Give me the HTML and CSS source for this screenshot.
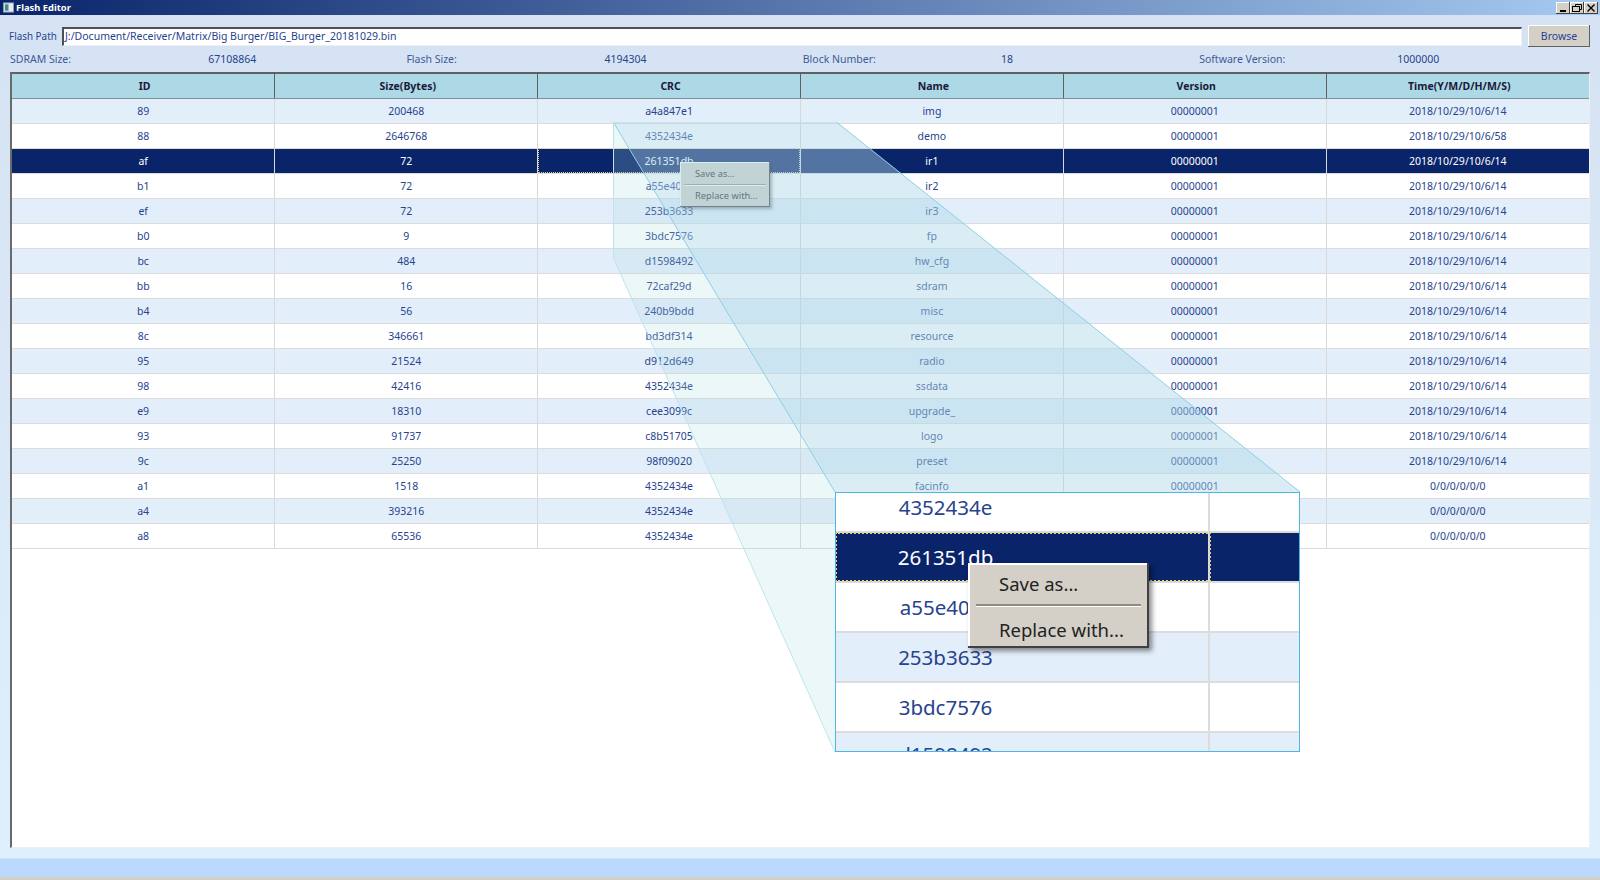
FILE: index.html
```html
<!DOCTYPE html>
<html lang="en">
  <head>
    <meta charset="UTF-8" />
    <meta name="viewport" content="width=device-width, initial-scale=1.0" />
    <title>Flash Editor</title>
    <link rel="stylesheet" href="styles.css">
  </head>

  <body>
    <div class="window">
      <div class="title-bar">
        <svg class="app-icon" width="11" height="11" viewBox="0 0 12 11">
          <rect x="0.5" y="0.5" width="11" height="10" fill="#e8ecef" stroke="#8fa0b0" />
          <rect x="2" y="2" width="4" height="7" fill="#3f8f86" />
        </svg>
        <span class="title-text">Flash Editor</span>
        <div class="window-buttons">
          <button class="window-button">
            <svg width="14" height="12" viewBox="0 0 14 12"><rect x="4" y="8" width="6" height="2" fill="#000" /></svg>
          </button>
          <button class="window-button">
            <svg width="14" height="12" viewBox="0 0 14 12" fill="none" stroke="#000"><path d="M5.5 4.5V2.5H11.5V7.5H9.5" /><rect x="2.5" y="4.5" width="7" height="5" /></svg>
          </button>
          <button class="window-button">
            <svg width="14" height="12" viewBox="0 0 14 12" fill="none" stroke="#000" stroke-width="1.4"><path d="M3.5 2.5L10.5 9.5M10.5 2.5L3.5 9.5" /></svg>
          </button>
        </div>
      </div>

      <div class="content">
        <div class="path-row">
          <span class="path-label">Flash Path</span>
          <div class="path-input">J:/Document/Receiver/Matrix/Big Burger/BIG_Burger_20181029.bin</div>
          <button class="browse-button">Browse</button>
        </div>

        <div class="info-row">
          <span class="info-label">SDRAM Size:</span><span>67108864</span>
          <span class="info-label">Flash Size:</span><span>4194304</span>
          <span class="info-label">Block Number:</span><span>18</span>
          <span class="info-label">Software Version:</span><span>1000000</span>
        </div>

        <div class="table-frame">
          <table class="flash-table">
            <thead>
              <tr><th>ID</th><th>Size(Bytes)</th><th>CRC</th><th>Name</th><th>Version</th><th>Time(Y/M/D/H/M/S)</th></tr>
            </thead>
            <tbody>
              <tr><td>89</td><td>200468</td><td>a4a847e1</td><td>img</td><td>00000001</td><td>2018/10/29/10/6/14</td></tr>
              <tr><td>88</td><td>2646768</td><td>4352434e</td><td>demo</td><td>00000001</td><td>2018/10/29/10/6/58</td></tr>
              <tr class="selected"><td>af</td><td>72</td><td class="focused">261351db</td><td>ir1</td><td>00000001</td><td>2018/10/29/10/6/14</td></tr>
              <tr><td>b1</td><td>72</td><td>a55e40c7</td><td>ir2</td><td>00000001</td><td>2018/10/29/10/6/14</td></tr>
              <tr><td>ef</td><td>72</td><td>253b3633</td><td>ir3</td><td>00000001</td><td>2018/10/29/10/6/14</td></tr>
              <tr><td>b0</td><td>9</td><td>3bdc7576</td><td>fp</td><td>00000001</td><td>2018/10/29/10/6/14</td></tr>
              <tr><td>bc</td><td>484</td><td>d1598492</td><td>hw_cfg</td><td>00000001</td><td>2018/10/29/10/6/14</td></tr>
              <tr><td>bb</td><td>16</td><td>72caf29d</td><td>sdram</td><td>00000001</td><td>2018/10/29/10/6/14</td></tr>
              <tr><td>b4</td><td>56</td><td>240b9bdd</td><td>misc</td><td>00000001</td><td>2018/10/29/10/6/14</td></tr>
              <tr><td>8c</td><td>346661</td><td>bd3df314</td><td>resource</td><td>00000001</td><td>2018/10/29/10/6/14</td></tr>
              <tr><td>95</td><td>21524</td><td>d912d649</td><td>radio</td><td>00000001</td><td>2018/10/29/10/6/14</td></tr>
              <tr><td>98</td><td>42416</td><td>4352434e</td><td>ssdata</td><td>00000001</td><td>2018/10/29/10/6/14</td></tr>
              <tr><td>e9</td><td>18310</td><td>cee3099c</td><td>upgrade_</td><td>00000001</td><td>2018/10/29/10/6/14</td></tr>
              <tr><td>93</td><td>91737</td><td>c8b51705</td><td>logo</td><td>00000001</td><td>2018/10/29/10/6/14</td></tr>
              <tr><td>9c</td><td>25250</td><td>98f09020</td><td>preset</td><td>00000001</td><td>2018/10/29/10/6/14</td></tr>
              <tr><td>a1</td><td>1518</td><td>4352434e</td><td>facinfo</td><td>00000001</td><td>0/0/0/0/0/0</td></tr>
              <tr><td>a4</td><td>393216</td><td>4352434e</td><td></td><td></td><td>0/0/0/0/0/0</td></tr>
              <tr><td>a8</td><td>65536</td><td>4352434e</td><td></td><td></td><td>0/0/0/0/0/0</td></tr>
            </tbody>
          </table>
        </div>
      </div>

      <div class="status-bar"></div>

      <!-- context menu under the callout -->
      <div class="context-menu small-menu">
        <div class="menu-item">Save as...</div>
        <div class="menu-separator"></div>
        <div class="menu-item">Replace with...</div>
      </div>

      <svg class="callout" width="1600" height="880" viewBox="0 0 1600 880">
        <polygon class="callout-side" points="613,122 835,492 835,752 613,258" />
        <polygon class="callout-top" points="613,122 837,122 1300,492 835,492" />
        <path class="callout-edge" d="M613.5 122.5L835 492M837 122.5L1300 492" />
        <path class="callout-edge-light" d="M613.5 122.5V258L835 752" />
      </svg>

      <div class="zoom-panel">
        <div class="zoom-row"><span class="zoom-cell">4352434e</span><span></span></div>
        <div class="zoom-row zoom-selected"><span class="zoom-cell">261351db</span><span></span></div>
        <div class="zoom-row"><span class="zoom-cell">a55e40c7</span><span></span></div>
        <div class="zoom-row zoom-alt"><span class="zoom-cell">253b3633</span><span></span></div>
        <div class="zoom-row"><span class="zoom-cell">3bdc7576</span><span></span></div>
        <div class="zoom-row zoom-alt zoom-cut"><span class="zoom-cell">d1598492</span><span></span></div>

        <div class="context-menu big-menu">
          <div class="menu-item">Save as...</div>
          <div class="menu-separator"></div>
          <div class="menu-item">Replace with...</div>
        </div>
      </div>
    </div>
  </body>
</html>
```

FILE: styles.css
```css
* {
  box-sizing: border-box;
}

body {
  margin: 0;
  font-family: "Noto Sans", "Liberation Sans", sans-serif;
  font-size: 10.5px;
  color: #27438e;
}

button {
  font-family: inherit;
  padding: 0;
}

.window {
  position: relative;
  display: flex;
  flex-direction: column;
  width: 1600px;
  height: 880px;
  overflow: hidden;
  border-bottom: 3px solid #d4d0c8;
  background: linear-gradient(to bottom, #d5e2f3, #dfeffc);
}

.title-bar {
  display: flex;
  align-items: center;
  gap: 2px;
  height: 15px;
  flex: none;
  padding: 0 2px 0 3px;
  background: linear-gradient(to right, #0a246a, #a6caf0);
}

.title-text {
  color: white;
  font-weight: bold;
  font-size: 9.4px;
}

.window-buttons {
  display: flex;
  margin-left: auto;
}

.window-button {
  display: flex;
  width: 14px;
  height: 12px;
  border: none;
  background-color: #d4d0c8;
  box-shadow: inset -1px -1px 0 #404040, inset 1px 1px 0 white;
}

.content {
  display: flex;
  flex-direction: column;
  flex: 1;
  padding: 10px;
  min-height: 0;
}

.path-row {
  display: flex;
  align-items: center;
  gap: 5px;
  height: 22px;
  flex: none;
}

.path-label {
  width: 47px;
  margin-left: -1px;
  margin-right: 1px;
  font-size: 9.9px;
  white-space: nowrap;
}

.path-input {
  flex: 1;
  height: 19px;
  margin-right: 1px;
  padding-left: 1px;
  line-height: 15px;
  background-color: white;
  border: 1px solid #f0f0f0;
  border-top: 2px solid #505050;
  border-left: 2px solid #505050;
}

.browse-button {
  width: 62px;
  height: 22px;
  border: none;
  font-size: 10.5px;
  color: #27438e;
  background-color: #d4d0c8;
  box-shadow: inset -1px -1px 0 #606060, inset 1px 1px 0 white;
}

.info-row {
  display: grid;
  grid-template-columns: repeat(8, 198.2px);
  align-items: center;
  height: 25px;
  padding-bottom: 2px;
  flex: none;
}

.info-label {
  color: #3e5a98;
}

.table-frame {
  flex: 1;
  min-height: 0;
  background-color: white;
  border: 1px solid #efefef;
  border-top: 2px solid #606060;
  border-left: 2px solid #6a6a6a;
}

.flash-table {
  width: 100%;
  border-collapse: collapse;
  table-layout: fixed;
  text-align: center;
}

.flash-table th {
  height: 24px;
  padding: 0 0 0 3px;
  font-size: 10.5px;
  color: #1a1a3a;
  background-color: #add8e6;
  border-right: 1px solid #606060;
  border-bottom: 1px solid #7f8f96;
}

.flash-table th:last-child {
  border-right: none;
}

.flash-table td {
  height: 25px;
  padding: 0;
  border-right: 1px solid #d8d8d8;
  border-bottom: 1px solid #dcdcdc;
}

.flash-table td:last-child {
  border-right: none;
}

.flash-table tbody tr:nth-child(odd) {
  background-color: #e3eefb;
}

.flash-table tbody tr.selected {
  background-color: #0a246a;
  color: white;
}

.flash-table td.focused {
  outline: 1px dotted #e0d090;
  outline-offset: -1px;
}

.status-bar {
  height: 19px;
  flex: none;
  background-color: #bbd9fd;
  border-top: 1px solid #cfe3fa;
}

.context-menu {
  position: absolute;
  color: #222;
  background-color: #d4d0c8;
  box-shadow: inset -1px -1px 0 #404040, inset 1px 1px 0 white, 2px 2px 3px rgba(0, 0, 0, 0.4);
}

.small-menu {
  left: 680px;
  top: 162px;
  width: 90px;
  height: 45px;
  padding: 4px 4px;
  font-size: 9.3px;
}

.small-menu .menu-item {
  height: 16px;
  padding-left: 11px;
  line-height: 16px;
}

.small-menu .menu-separator {
  height: 2px;
  margin: 2px 0;
  background-color: #8f8c85;
  border-bottom: 1px solid white;
}

.callout {
  position: absolute;
  left: 0;
  top: 0;
}

.callout-top {
  fill: #add8e6;
  fill-opacity: 0.45;
}

.callout-side {
  fill: #a9dae0;
  fill-opacity: 0.22;
}

.callout-edge {
  fill: none;
  stroke: #8fd0e6;
}

.callout-edge-light {
  fill: none;
  stroke: #bfe4f0;
}

.zoom-panel {
  position: absolute;
  left: 835px;
  top: 492px;
  width: 465px;
  height: 260px;
  overflow: hidden;
  background-color: white;
  border: 1px solid #4db8e8;
  font-size: 20.5px;
  color: #27438e;
}

.zoom-row {
  display: grid;
  grid-template-columns: 374px 1fr;
  height: 50px;
  border-bottom: 2px solid #dcdcdc;
}

.zoom-row:first-child {
  margin-top: -10px;
}

.zoom-cell {
  height: 48px;
  padding-right: 153px;
  line-height: 48px;
  text-align: center;
  border-right: 2px solid #dcdcdc;
}

.zoom-selected {
  background-color: #0a246a;
  color: white;
}

.zoom-selected .zoom-cell {
  outline: 2px dotted #e0d090;
  outline-offset: -1px;
}

.zoom-alt {
  background-color: #e3eefb;
}

.zoom-cut .zoom-cell {
  line-height: 43px;
}

.big-menu {
  left: 132px;
  top: 70px;
  width: 181px;
  height: 85px;
  padding: 6px 8px;
  font-size: 18.5px;
  box-shadow: inset -2px -2px 0 #404040, inset 2px 2px 0 white, 3px 3px 5px rgba(0, 0, 0, 0.45);
}

.big-menu .menu-item {
  height: 30px;
  padding-left: 23px;
  line-height: 30px;
}

.big-menu .menu-separator {
  height: 3px;
  margin: 5px 0 8px;
  background-color: #8f8c85;
  border-bottom: 1px solid white;
}
```
